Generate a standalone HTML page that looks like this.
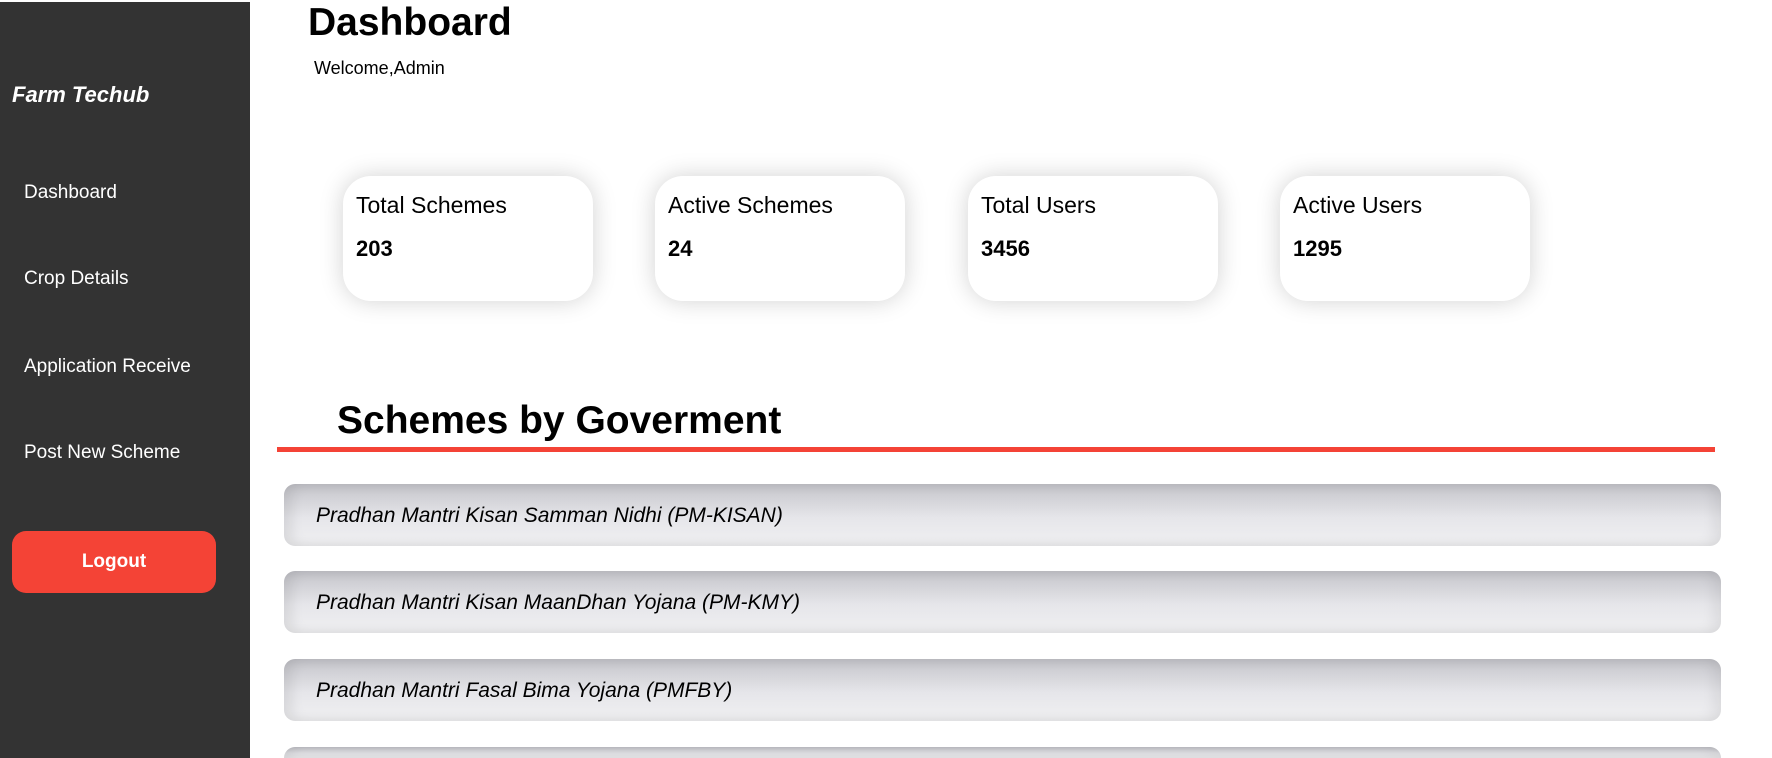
<!DOCTYPE html>
<html style="width:1772px;height:758px;overflow:hidden"><head><style>
*{margin:0;padding:0;box-sizing:border-box}
body{width:1772px;height:758px;overflow:hidden;background:#fff;font-family:"Segoe UI","Liberation Sans","DejaVu Sans",sans-serif;position:relative}
.sb{position:absolute;left:0;top:2px;width:250px;height:756px;background:#333}
.logo{position:absolute;left:12px;top:80px;color:#fff;font-weight:bold;font-style:italic;font-size:22px}
.nav{position:absolute;left:24px;color:#fff;font-size:19px}
.lo{position:absolute;left:12px;width:204px;height:62px;background:#f44336;border-radius:14px;color:#fff;font-weight:bold;font-size:19px;text-align:center;line-height:62px;font-family:"Liberation Sans",sans-serif}
h1{position:absolute;left:308px;top:1px;font-size:39px;font-weight:bold}
.wel{position:absolute;left:314px;top:58px;font-size:18px}
.card{position:absolute;top:176px;width:250px;height:125px;background:#fff;border-radius:28px;box-shadow:0 0 24px rgba(0,0,0,0.18)}
.card .t{position:absolute;left:13px;top:16px;font-size:23px}
.card .n{position:absolute;left:13px;top:60px;font-size:22px;font-weight:bold}
h2{position:absolute;left:337px;top:399px;font-size:39px;font-weight:bold}
.line{position:absolute;left:277px;top:447px;width:1438px;height:5px;background:#f44336}
.it{position:absolute;left:284px;width:1437px;height:62px;border-radius:11px;background:linear-gradient(#c4c4ca,#e6e6ea 55%,#f0f0f2);box-shadow:inset 8px 0 12px rgba(0,0,0,0.08),inset -8px 0 12px rgba(0,0,0,0.06)}
.it span{position:absolute;left:32px;top:20px;font-style:italic;font-size:21px}
</style></head><body>
<div class="sb">
<div class="logo">Farm Techub</div>
<div class="nav" style="top:180px">Dashboard</div>
<div class="nav" style="top:266px">Crop Details</div>
<div class="nav" style="top:354px">Application Receive</div>
<div class="nav" style="top:440px">Post New Scheme</div>
<div class="lo" style="top:529px">Logout</div>
</div>
<h1>Dashboard</h1>
<div class="wel">Welcome,Admin</div>
<div class="card" style="left:343px"><div class="t">Total Schemes</div><div class="n">203</div></div>
<div class="card" style="left:655px"><div class="t">Active Schemes</div><div class="n">24</div></div>
<div class="card" style="left:968px"><div class="t">Total Users</div><div class="n">3456</div></div>
<div class="card" style="left:1280px"><div class="t">Active Users</div><div class="n">1295</div></div>
<h2>Schemes by Goverment</h2>
<div class="line"></div>
<div class="it" style="top:484px"><span>Pradhan Mantri Kisan Samman Nidhi (PM-KISAN)</span></div>
<div class="it" style="top:571px"><span>Pradhan Mantri Kisan MaanDhan Yojana (PM-KMY)</span></div>
<div class="it" style="top:659px"><span>Pradhan Mantri Fasal Bima Yojana (PMFBY)</span></div>
<div class="it" style="top:747px;height:11px;border-radius:11px 11px 0 0"></div>
</body></html>
